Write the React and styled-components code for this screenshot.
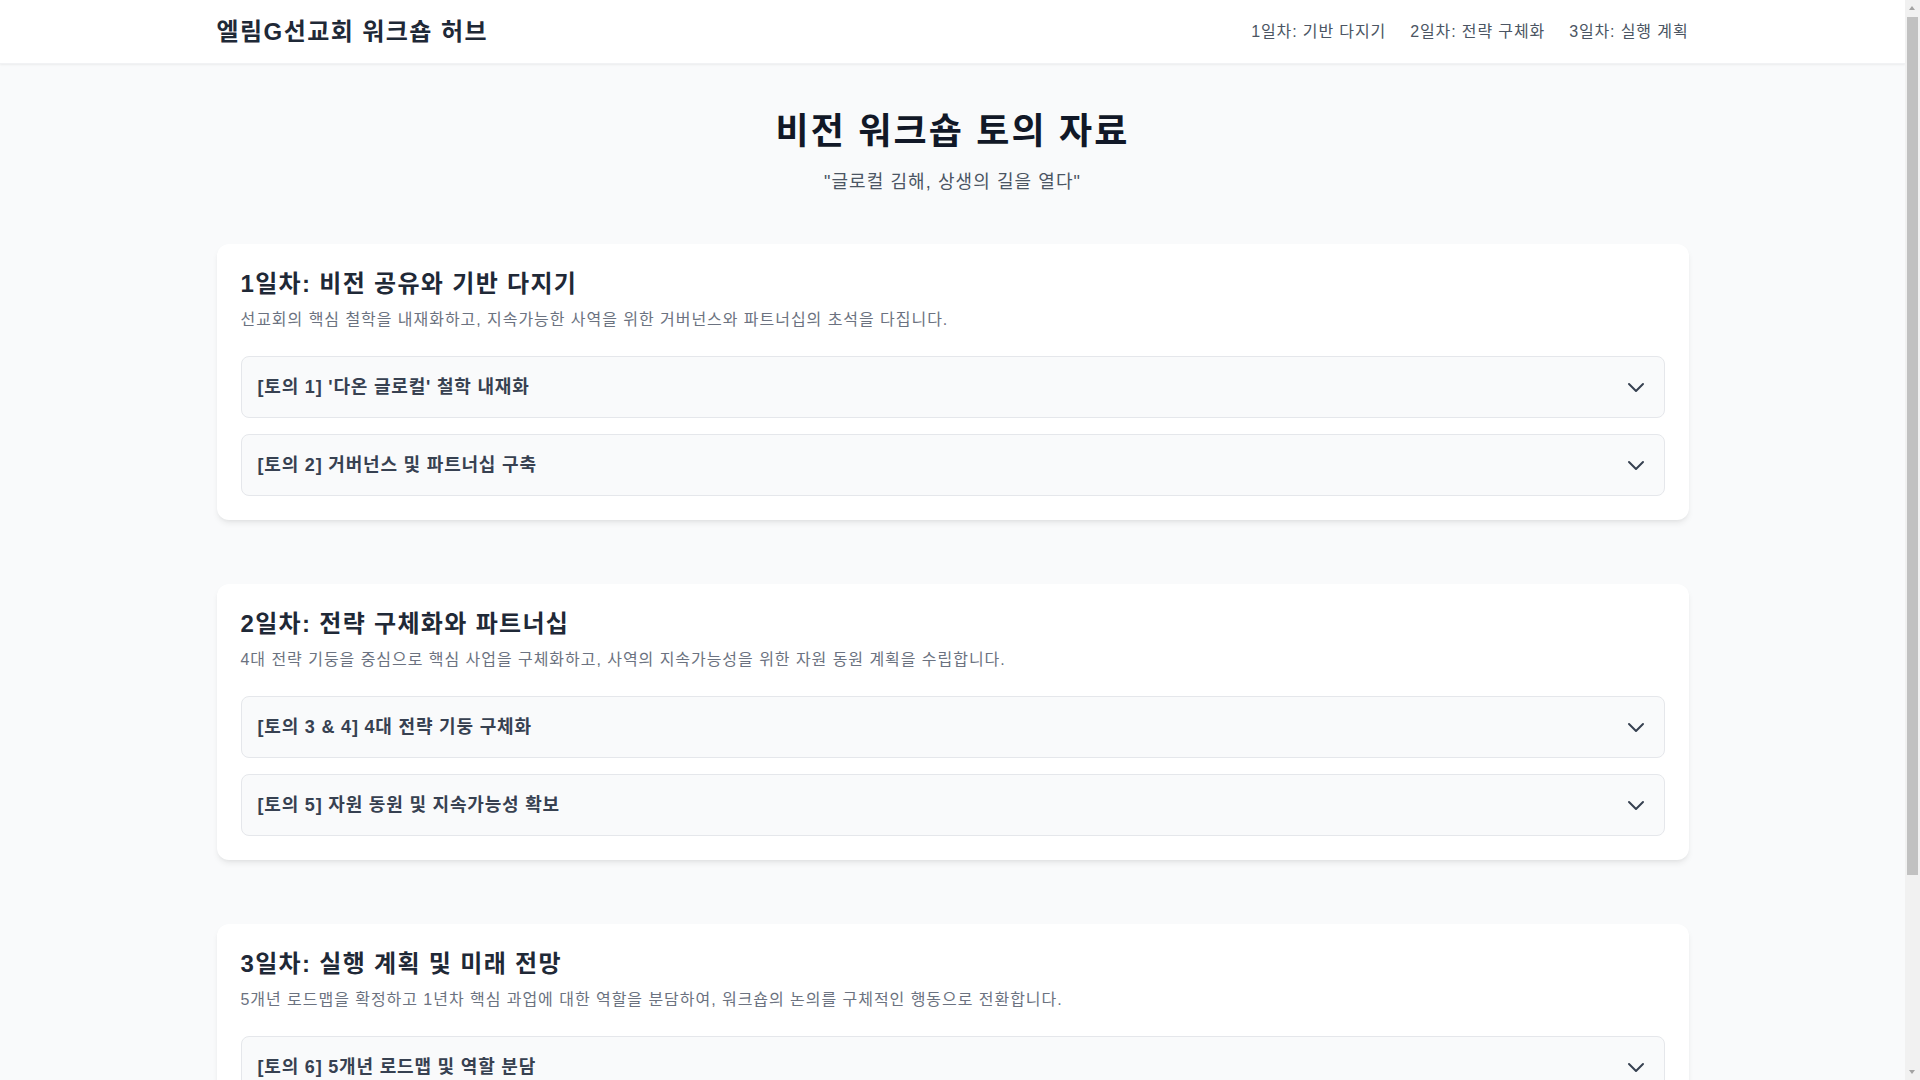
import React, { useState } from "react";
import styled, { createGlobalStyle } from "styled-components";

const GlobalStyle = createGlobalStyle`
  * { box-sizing: border-box; }
  html, body { margin: 0; padding: 0; }
  body {
    background: #f9fafb;
    font-family: "Liberation Sans", "Noto Sans CJK SC", sans-serif;
    color: #1f2937;
    padding-right: 15px;
  }
`;

const ScrollTrack = styled.div`
  position: fixed;
  top: 0;
  right: 0;
  bottom: 0;
  width: 15px;
  background: #f1f1f1;
  z-index: 50;
`;

const ScrollThumb = styled.div`
  position: absolute;
  top: 17px;
  left: 2px;
  right: 2px;
  height: 858px;
  background: #c1c1c1;
`;

const ScrollArrow = styled.div`
  position: absolute;
  left: 4px;
  width: 0;
  height: 0;
  border-left: 3.5px solid transparent;
  border-right: 3.5px solid transparent;
  ${(p) => (p.$down ? "bottom: 6px; border-top: 4px solid #a3a3a3;" : "top: 6px; border-bottom: 4px solid #a3a3a3;")}
`;

const Header = styled.header`
  background: #ffffff;
  box-shadow: 0 1px 2px 0 rgba(0, 0, 0, 0.06);
  border-bottom: 1px solid #f1f2f4;
`;

const Container = styled.div`
  max-width: 1536px;
  margin: 0 auto;
  padding: 0 32px;
`;

const HeaderBar = styled(Container)`
  height: 63px;
  display: flex;
  align-items: center;
  justify-content: space-between;
`;

const Brand = styled.div`
  font-size: 24px;
  line-height: 32px;
  font-weight: 700;
  letter-spacing: 0.06em;
  color: #1f2937;
`;

const Nav = styled.nav`
  display: flex;
  gap: 24px;
`;

const NavLink = styled.a`
  font-size: 16px;
  line-height: 24px;
  letter-spacing: 0.055em;
  color: #4b5563;
  text-decoration: none;
  cursor: pointer;
  &:hover { color: #111827; }
`;

const Main = styled(Container)`
  padding-top: 48px;
  padding-bottom: 48px;
`;

const Hero = styled.div`
  text-align: center;
  margin-bottom: 48px;
`;

const HeroTitle = styled.h1`
  margin: 0 0 16px;
  font-size: 36px;
  line-height: 40px;
  font-weight: 700;
  letter-spacing: 0.06em;
  color: #111827;
`;

const HeroSub = styled.p`
  margin: 0;
  font-size: 18px;
  line-height: 28px;
  letter-spacing: 0.06em;
  color: #4b5563;
`;

const Sections = styled.div`
  display: flex;
  flex-direction: column;
  gap: 64px;
`;

const Card = styled.section`
  background: #ffffff;
  border-radius: 12px;
  padding: 24px;
  box-shadow: 0 4px 6px -1px rgba(0, 0, 0, 0.08), 0 2px 4px -2px rgba(0, 0, 0, 0.06);
`;

const CardTitle = styled.h2`
  margin: 0 0 8px;
  font-size: 24px;
  line-height: 32px;
  font-weight: 700;
  letter-spacing: 0.055em;
  color: #1f2937;
`;

const CardDesc = styled.p`
  margin: 0 0 24px;
  font-size: 16px;
  line-height: 24px;
  letter-spacing: 0.06em;
  color: #6b7280;
`;

const AccordionList = styled.div`
  display: flex;
  flex-direction: column;
  gap: 16px;
`;

const AccordionItem = styled.div`
  background: #f9fafb;
  border: 1px solid #e5e7eb;
  border-radius: 8px;
`;

const AccordionHead = styled.button`
  width: 100%;
  display: flex;
  align-items: center;
  justify-content: space-between;
  padding: 16px;
  border: 0;
  background: transparent;
  font-family: inherit;
  font-size: 18px;
  line-height: 28px;
  font-weight: 700;
  letter-spacing: 0.045em;
  color: #374151;
  text-align: left;
  cursor: pointer;
`;

const Chevron = styled.svg`
  width: 24px;
  height: 24px;
  flex-shrink: 0;
  color: #374151;
  transform: rotate(${(p) => (p.$open ? 180 : 0)}deg);
  transition: transform 0.2s;
`;

const AccordionBody = styled.div`
  padding: 0 16px 16px;
  font-size: 16px;
  line-height: 24px;
  color: #4b5563;
`;

const days = [
  {
    title: "1일차: 비전 공유와 기반 다지기",
    desc: "선교회의 핵심 철학을 내재화하고, 지속가능한 사역을 위한 거버넌스와 파트너십의 초석을 다집니다.",
    items: ["[토의 1] '다온 글로컬' 철학 내재화", "[토의 2] 거버넌스 및 파트너십 구축"],
  },
  {
    title: "2일차: 전략 구체화와 파트너십",
    desc: "4대 전략 기둥을 중심으로 핵심 사업을 구체화하고, 사역의 지속가능성을 위한 자원 동원 계획을 수립합니다.",
    items: ["[토의 3 & 4] 4대 전략 기둥 구체화", "[토의 5] 자원 동원 및 지속가능성 확보"],
  },
  {
    title: "3일차: 실행 계획 및 미래 전망",
    desc: "5개년 로드맵을 확정하고 1년차 핵심 과업에 대한 역할을 분담하여, 워크숍의 논의를 구체적인 행동으로 전환합니다.",
    items: ["[토의 6] 5개년 로드맵 및 역할 분담"],
  },
];

function Accordion({ label }) {
  const [open, setOpen] = useState(false);
  return (
    <AccordionItem>
      <AccordionHead onClick={() => setOpen(!open)}>
        <span>{label}</span>
        <Chevron $open={open} viewBox="0 0 24 24" fill="none" stroke="currentColor" strokeWidth="2" strokeLinecap="round" strokeLinejoin="round">
          <path d="M19 9l-7 7-7-7" />
        </Chevron>
      </AccordionHead>
      {open && <AccordionBody>토의 내용이 여기에 표시됩니다.</AccordionBody>}
    </AccordionItem>
  );
}

export default function App() {
  return (
    <>
      <GlobalStyle />
      <Header>
        <HeaderBar>
          <Brand>엘림G선교회 워크숍 허브</Brand>
          <Nav>
            <NavLink>1일차: 기반 다지기</NavLink>
            <NavLink>2일차: 전략 구체화</NavLink>
            <NavLink>3일차: 실행 계획</NavLink>
          </Nav>
        </HeaderBar>
      </Header>
      <Main>
        <Hero>
          <HeroTitle>비전 워크숍 토의 자료</HeroTitle>
          <HeroSub>"글로컬 김해, 상생의 길을 열다"</HeroSub>
        </Hero>
        <Sections>
          {days.map((d) => (
            <Card key={d.title}>
              <CardTitle>{d.title}</CardTitle>
              <CardDesc>{d.desc}</CardDesc>
              <AccordionList>
                {d.items.map((it) => (
                  <Accordion key={it} label={it} />
                ))}
              </AccordionList>
            </Card>
          ))}
        </Sections>
      </Main>
      <ScrollTrack aria-hidden="true">
        <ScrollArrow />
        <ScrollThumb />
        <ScrollArrow $down />
      </ScrollTrack>
    </>
  );
}
